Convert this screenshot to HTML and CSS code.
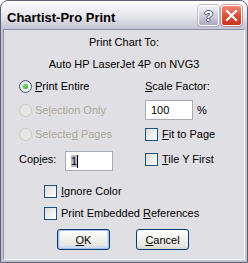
FILE: index.html
```html
<!DOCTYPE html>
<html lang="en">
<head>
    <meta charset="UTF-8">
    <title>Chartist-Pro Print</title>
    <link rel="stylesheet" href="styles.css">
</head>
<body>
    <div class="window">
        <div class="titlebar">
            <span class="title">Chartist-Pro Print</span>
            <div class="caption-buttons">
                <div class="cap-btn help">?</div>
                <div class="cap-btn close">
                    <svg width="13" height="13" viewBox="0 0 13 13">
                        <path d="M2 2 L11 11 M11 2 L2 11" stroke="#fff" stroke-width="2.2" stroke-linecap="square"/>
                    </svg>
                </div>
            </div>
        </div>

        <div class="client">
            <div class="center-row heading">Print Chart To:</div>
            <div class="center-row printer">Auto HP LaserJet 4P on NVG3</div>

            <!-- Options grid: print range on the left, scaling on the right -->
            <div class="options">
                <div class="cell">
                    <span class="radio checked"></span>
                    <span class="opt-text"><u>P</u>rint Entire</span>
                </div>
                <div class="cell"><u>S</u>cale Factor:</div>

                <div class="cell disabled">
                    <span class="radio"></span>
                    <span class="opt-text">Se<u>l</u>ection Only</span>
                </div>
                <div class="cell">
                    <div class="textbox">100</div>
                    <span class="percent">%</span>
                </div>

                <div class="cell disabled">
                    <span class="radio"></span>
                    <span class="opt-text">Selecte<u>d</u> Pages</span>
                </div>
                <div class="cell">
                    <span class="checkbox"></span>
                    <span class="chk-text"><u>F</u>it to Page</span>
                </div>

                <div class="cell tall">
                    <span class="copies-label">Cop<u>i</u>es:</span>
                    <div class="textbox low"><span class="sel">1</span><span class="caret"></span></div>
                </div>
                <div class="cell tall">
                    <span class="checkbox"></span>
                    <span class="chk-text"><u>T</u>ile Y First</span>
                </div>
            </div>

            <div class="check-row first">
                <span class="checkbox"></span>
                <span class="chk-text"><u>I</u>gnore Color</span>
            </div>
            <div class="check-row">
                <span class="checkbox"></span>
                <span class="chk-text">Print Embedded <u>R</u>eferences</span>
            </div>

            <div class="buttons">
                <div class="btn default"><u>O</u>K</div>
                <div class="btn"><u>C</u>ancel</div>
            </div>
        </div>
    </div>
</body>
</html>
```

FILE: styles.css
```css
* {
    box-sizing: border-box;
}

body {
    margin: 0;
    font-family: "Liberation Sans", Arial, sans-serif;
    font-size: 11px;
    color: #000;
    background: #fff;
}

.window {
    width: 248px;
    height: 263px;
    display: flex;
    flex-direction: column;
    border: 1px solid #5f5f76;
    border-radius: 8px 8px 0 0;
    background: #c2c2d0; /* frame colour */
    overflow: hidden;
}

/* Title bar (XP silver) */
.titlebar {
    height: 28px;
    flex: none;
    display: flex;
    justify-content: space-between;
    padding: 0 5px 0 6px;
    background: linear-gradient(#ffffff 0%, #f3f3f7 25%, #e2e2ea 60%, #c3c3d4 100%);
}

.title {
    font-size: 13px;
    font-weight: bold;
    line-height: 15px;
    margin-top: 9px;
    color: #000;
}

.caption-buttons {
    display: flex;
    gap: 2px;
    margin-top: 4px;
}

.cap-btn {
    width: 21px;
    height: 21px;
    border: 1px solid #fff;
    border-radius: 3px;
    display: flex;
    align-items: center;
    justify-content: center;
}

.help {
    background: linear-gradient(#f4f4f8, #c9c9d8 60%, #a9a9c0);
    box-shadow: 0 0 0 0.5px #8a8aa0;
    font-size: 15px;
    font-weight: bold;
    color: #fff;
    text-shadow: 1px 0 0 #55556a, -1px 0 0 #55556a, 0 1px 0 #55556a, 0 -1px 0 #55556a;
    line-height: 1;
}

.close {
    background: linear-gradient(#f08a78, #dd4a36 55%, #c8341f);
    box-shadow: 0 0 0 0.5px #a04a40;
}

/* Client area */
.client {
    flex: 1;
    margin: 0 2px 2px 2px;
    background: #e0dfe3;
    border-top: 1px solid #8e8ea2;
    border-left: 1px solid #8e8ea2;
    border-right: 1px solid #fdfdfd;
    border-bottom: 1px solid #fdfdfd;
    padding-left: 15px;
    display: flex;
    flex-direction: column;
}

.center-row {
    display: flex;
    align-items: center;
    justify-content: center;
    margin-left: -15px;
}

.heading {
    height: 24px;
}

.printer {
    height: 20px;
}

.options {
    display: grid;
    grid-template-columns: 126px 1fr;
    grid-auto-rows: 24px;
}

.cell {
    display: flex;
    align-items: center;
}

.cell.tall {
    height: 26px;
}

.disabled {
    color: #aca899;
}

.radio {
    width: 13px;
    height: 13px;
    border-radius: 50%;
    border: 1px solid #3b5a78;
    background: linear-gradient(135deg, #dcdcd7, #ffffff);
    display: flex;
    align-items: center;
    justify-content: center;
}

.radio.checked::after {
    content: "";
    width: 5px;
    height: 5px;
    border-radius: 50%;
    background: radial-gradient(circle at 40% 40%, #7be07b, #21a121);
}

.disabled .radio {
    border-color: #cac8bb;
    background: #e6e5e6;
}

.opt-text {
    margin-left: 3px;
}

.checkbox {
    width: 13px;
    height: 13px;
    flex: none;
    border: 1px solid #1c5180;
    background: linear-gradient(135deg, #dcdcd7, #ffffff);
}

.chk-text {
    margin-left: 4px;
}

.textbox {
    width: 48px;
    height: 20px;
    border: 1px solid #a5acb5;
    background: #fff;
    padding-left: 5px;
    display: flex;
    align-items: center;
}

.textbox.low {
    align-self: flex-end;
    margin-bottom: 1px;
}

.sel {
    background: #b8b8cc;
}

.caret {
    width: 1px;
    height: 13px;
    background: #000;
}

.percent {
    margin-left: 4px;
}

.copies-label {
    width: 46px;
}

.check-row {
    display: flex;
    align-items: center;
    height: 22px;
    padding-left: 25px;
}

.check-row.first {
    margin-top: 10px;
}

.buttons {
    display: flex;
    gap: 26px;
    margin-top: 5px;
    padding-left: 38px;
}

.btn {
    width: 53px;
    height: 21px;
    border: 1px solid #003c74;
    border-radius: 3px;
    background: linear-gradient(#ffffff, #f4f4f0 40%, #e6e5e0 85%, #d6d4cc);
    display: flex;
    align-items: center;
    justify-content: center;
}

.btn.default {
    box-shadow: inset 0 0 0 1px #a8c0ea, inset 0 -1px 0 2px #cfdcf6;
}
```
